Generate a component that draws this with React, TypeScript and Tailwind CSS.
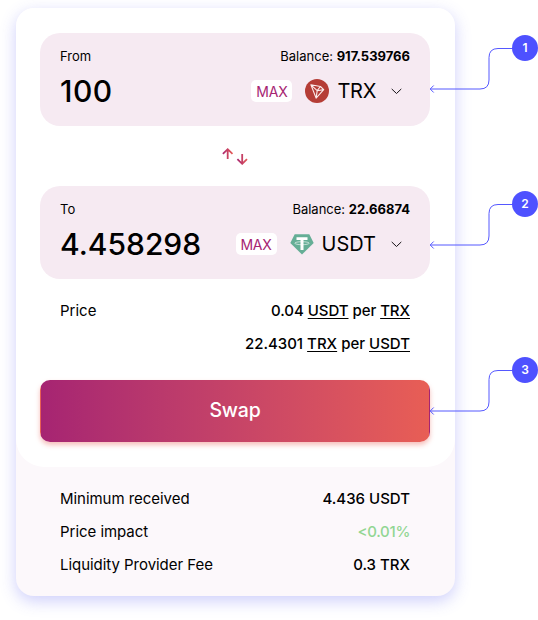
import React from "react";

function TronIcon() {
  return (
    <svg width="24" height="24" viewBox="0 0 24 24" fill="none" className="shrink-0">
      <circle cx="12" cy="12" r="12" fill="#b53d36" />
      <path
        d="M5.9 5.8L15.4 7.5L18.7 10.6L11.1 19.1Z M5.9 5.8L12.2 11.7L15.4 7.5 M12.2 11.7L18.7 10.6 M12.2 11.7L11.1 19.1"
        stroke="#fbeceb"
        strokeWidth="1.1"
        strokeLinejoin="round"
      />
    </svg>
  );
}

function TetherIcon() {
  return (
    <svg width="24" height="21" viewBox="0 0 24 21" fill="none" className="shrink-0">
      <path d="M4.7 0.3H19.3L23.7 9.1L12 20.6L0.3 9.1Z" fill="#65ae96" />
      <ellipse cx="12" cy="9.2" rx="7.2" ry="1.5" stroke="#fff" strokeOpacity="0.85" strokeWidth="0.7" />
      <path d="M6.5 3.3H17.5V6.1H13.5V16H10.5V6.1H6.5Z" fill="#fff" />
    </svg>
  );
}

function Chevron() {
  return (
    <svg width="11" height="7" viewBox="0 0 11 7" fill="none" className="shrink-0">
      <path d="M1 1.2L5.5 5.5L10 1.2" stroke="#171317" strokeWidth="1" strokeLinecap="round" strokeLinejoin="round" />
    </svg>
  );
}

function SwapArrows() {
  return (
    <svg width="26" height="18" viewBox="0 0 26 18" fill="none">
      <defs>
        <linearGradient id="up" gradientUnits="userSpaceOnUse" x1="0" y1="0" x2="11" y2="0">
          <stop stopColor="#a62472" />
          <stop offset="1" stopColor="#e85e55" />
        </linearGradient>
        <linearGradient id="down" gradientUnits="userSpaceOnUse" x1="15" y1="0" x2="26" y2="0">
          <stop stopColor="#a62472" />
          <stop offset="1" stopColor="#e85e55" />
        </linearGradient>
      </defs>
      <path d="M5.7 12V2.5M0.9 6.9L5.7 2.2L10.5 6.9" stroke="url(#up)" strokeWidth="1.8" />
      <path d="M20.2 7V16.5M15.4 12.1L20.2 16.8L25 12.1" stroke="url(#down)" strokeWidth="1.8" />
    </svg>
  );
}

interface PanelProps {
  label: string;
  balance: string;
  amount: string;
  amountClass: string;
  symbol: string;
  symbolClass: string;
  icon: React.ReactNode;
}

function TokenPanel({ label, balance, amount, amountClass, symbol, symbolClass, icon }: PanelProps) {
  return (
    <section className="h-[93px] rounded-[20px] bg-[#f6eaf2] px-5 pt-[14px]">
      <div className="flex h-[18px] items-center justify-between text-[13px] leading-[18px]">
        <span>{label}</span>
        <span>
          Balance: <b className="font-bold">{balance}</b>
        </span>
      </div>
      <div className="mt-2 flex h-9 items-center">
        <span className={`text-[30px] leading-9 font-medium ${amountClass}`}>{amount}</span>
        <button className="ml-auto flex h-[22px] w-[41px] items-center justify-center rounded-[5px] bg-white text-[14px] tracking-[-0.2px] text-[#a62472]">
          MAX
        </button>
        <span className="ml-[13px] flex">{icon}</span>
        <span className={`ml-2 text-[20px] leading-9 ${symbolClass}`}>{symbol}</span>
        <span className="mr-2 ml-[15px] flex">
          <Chevron />
        </span>
      </div>
    </section>
  );
}

function Unit({ children }: { children: string }) {
  return <span className="underline decoration-1 underline-offset-2">{children}</span>;
}

function Row({ label, value, green = false }: { label: string; value: string; green?: boolean }) {
  return (
    <div className="flex h-[33px] items-center justify-between">
      <span className="tracking-[-0.04px]">{label}</span>
      <span className={green ? "font-medium tracking-[-0.3px] text-[#92d693]" : "font-medium"}>{value}</span>
    </div>
  );
}

function Callout({ number, className }: { number: string; className: string }) {
  return (
    <div className={`absolute left-[429px] h-[62px] w-[109px] ${className}`}>
      <svg width="109" height="62" viewBox="0 0 109 62" fill="none">
        <path
          d="M84 13.5H69Q60 13.5 60 22.5V45Q60 54 51 54H1.5M4.7 50.5L1.2 54L4.7 57.5"
          stroke="#5558ff"
          strokeWidth="1"
        />
      </svg>
      <span className="absolute top-0 left-[83px] flex size-[26px] items-center justify-center rounded-full bg-[#4e51ff] text-[12px] font-semibold text-white">
        {number}
      </span>
    </div>
  );
}

export default function App() {
  return (
    <div className="relative h-[620px] w-[538px] overflow-hidden bg-white pt-2 pl-4 font-['Inter',sans-serif] text-black">
      <main className="h-[588px] w-[439px] rounded-[18px] bg-[#fcf8fb] shadow-[0_5px_16px_rgba(80,82,240,0.28)]">
        <div className="h-[459px] rounded-t-[18px] rounded-b-[28px] bg-white pt-[25px] pr-[25px] pl-6">
          <TokenPanel
            label="From"
            balance="917.539766"
            amount="100"
            amountClass="tracking-[0.5px]"
            symbol="TRX"
            symbolClass="tracking-[-0.3px]"
            icon={<TronIcon />}
          />
          <div className="flex h-[60px] items-center justify-center">
            <SwapArrows />
          </div>
          <TokenPanel
            label="To"
            balance="22.66874"
            amount="4.458298"
            amountClass="tracking-normal"
            symbol="USDT"
            symbolClass="tracking-normal"
            icon={<TetherIcon />}
          />
          <div className="mt-[15px] flex justify-between px-5 text-[15px] leading-[33px]">
            <span>Price</span>
            <div className="text-right font-medium">
              <p className="tracking-[-0.05px]">
                0.04 <Unit>USDT</Unit> per <Unit>TRX</Unit>
              </p>
              <p>
                22.4301 <Unit>TRX</Unit> per <Unit>USDT</Unit>
              </p>
            </div>
          </div>
          <button className="mt-5 flex h-[62px] w-full items-center justify-center rounded-[10px] border border-transparent bg-linear-to-r from-[#a62472] to-[#e85e55] pb-px text-[19.5px] font-medium tracking-[-0.2px] text-white shadow-[0_3px_5px_rgba(232,94,85,0.4)]">
            Swap
          </button>
        </div>
        <div className="pt-4 pr-[45px] pl-11 text-[15px]">
          <Row label="Minimum received" value="4.436 USDT" />
          <Row label="Price impact" value="<0.01%" green />
          <Row label="Liquidity Provider Fee" value="0.3 TRX" />
        </div>
      </main>
      <Callout number="1" className="top-[35px]" />
      <Callout number="2" className="top-[191px]" />
      <Callout number="3" className="top-[357px]" />
    </div>
  );
}
